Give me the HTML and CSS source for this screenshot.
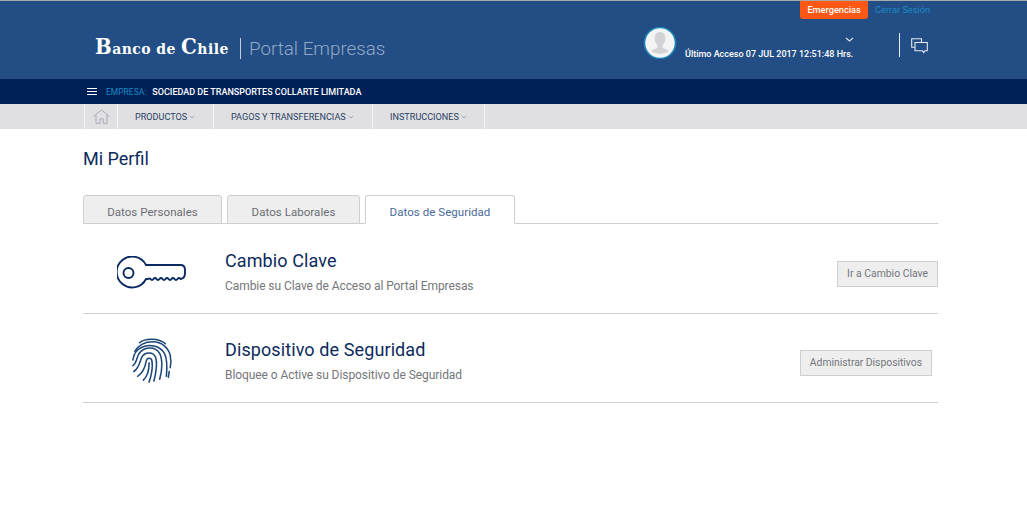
FILE: index.html
```html
<!DOCTYPE html>
<html lang="es">
<head>
<meta charset="utf-8">
<title>Mi Perfil</title>
<link rel="stylesheet" href="styles.css">
</head>
<body>
<header class="masthead">
  <div class="utility">
    <a class="emergency">Emergencias</a>
    <a class="logout">Cerrar Sesión</a>
  </div>
  <div class="brandrow">
    <span class="logo"><b class="logo-cap">B</b>anco de <b class="logo-cap">C</b>hile</span>
    <span class="portal">Portal Empresas</span>
    <div class="account">
      <svg class="avatar" viewBox="0 0 34 32" aria-hidden="true">
        <circle cx="17" cy="16" r="15.5" fill="#f4f4f5" stroke="#1b86b8" stroke-width="1.6"/>
        <path d="M17 5c-4 0-5.5 3.4-5.3 7 .1 2.6 1.3 5 2.8 6.200v2.300c-1.800 1.300-5 2-6.500 3.600a15 15 0 0 0 18 0c-1.500-1.600-4.700-2.300-6.500-3.600v-2.300c1.500-1.200 2.700-3.600 2.800-6.200.2-3.600-1.300-7-5.300-7z" fill="#d2d2d4"/>
      </svg>
      <div class="lastaccess">
        <svg class="chev" viewBox="0 0 9 5" aria-hidden="true"><path d="M1 1l3.500 3L8 1" fill="none" stroke="#dfe6ef" stroke-width="1.100"/></svg>
        <span>Último Acceso 07 JUL 2017 12:51:48 Hrs.</span>
      </div>
      <div class="chat">
        <svg viewBox="0 0 17 16" aria-hidden="true">
          <path d="M10.500 4V.7H.7v8.600h3" fill="none" stroke="#e4e8f0" stroke-width="1.100"/>
          <path d="M4 4.500h12.300v8.300h-2.300l-1.300 1.700-1.300-1.700H4z" fill="none" stroke="#e4e8f0" stroke-width="1.100"/>
        </svg>
      </div>
    </div>
  </div>
</header>
<div class="companybar">
  <span class="burger"><i></i><i></i><i></i></span>
  <span class="company-label">EMPRESA:</span>
  <span class="company-name">SOCIEDAD DE TRANSPORTES COLLARTE LIMITADA</span>
</div>
<nav class="menu">
  <a class="menu-home">
    <svg viewBox="0 0 17 15" aria-hidden="true">
      <path d="M.6 7.500 8.500.8l7.900 6.700M3 6v8.300h4v-4.500h3.200v4.500h3.800V6" fill="none" stroke="#a9a9bb" stroke-width="1"/>
    </svg>
  </a>
  <a class="menu-item">PRODUCTOS<svg class="caret" viewBox="0 0 7 4"><path d="M.7.7l2.800 2.400L6.300.7" fill="none" stroke="#9a9ca2"/></svg></a>
  <a class="menu-item">PAGOS Y TRANSFERENCIAS<svg class="caret" viewBox="0 0 7 4"><path d="M.7.7l2.800 2.400L6.300.7" fill="none" stroke="#9a9ca2"/></svg></a>
  <a class="menu-item">INSTRUCCIONES<svg class="caret" viewBox="0 0 7 4"><path d="M.7.7l2.800 2.400L6.300.7" fill="none" stroke="#9a9ca2"/></svg></a>
</nav>
<main class="page">
  <h1 class="title">Mi Perfil</h1>
  <div class="tabs">
    <a class="tab tab-personal">Datos Personales</a>
    <a class="tab tab-work">Datos Laborales</a>
    <a class="tab tab-security is-active">Datos de Seguridad</a>
  </div>
  <section class="row">
    <div class="row-icon">
      <svg class="key" viewBox="0 0 70 34" aria-hidden="true">
        <path d="M29 9H63.500q4.500 0 4.500 5v3q0 5.500-4.500 6q-1.500-2-3 0q-1.500 2-3 0q-1.500-2-3 0q-1.500 2-3 0q-1.500-2-3 0q-1.500 2-3 0q-1.500-2-3 0q-1.500 2-3 0q-1.500-2-3 0q-1.500 2-3 0q-1-1-2.500 0H29A15.500 15.500 0 1 1 29 9z" fill="none" stroke="#0a2a60" stroke-width="1.900" stroke-linejoin="round"/>
        <circle cx="11.500" cy="17" r="5" fill="none" stroke="#0a2a60" stroke-width="1.900"/>
      </svg>
    </div>
    <div class="row-text">
      <h2>Cambio Clave</h2>
      <p>Cambie su Clave de Acceso al Portal Empresas</p>
    </div>
    <a class="btn">Ir a Cambio Clave</a>
  </section>
  <section class="row">
    <div class="row-icon">
      <svg class="print" viewBox="0 0 44 48" aria-hidden="true">
        <g fill="none" stroke="#1c4679" stroke-width="1.600" stroke-linecap="round">
          <path d="M9 6C15 1 29 1 36 7"/>
          <path d="M4 15C9 7 16 5 23 5c9 0 16 6 18 14 1 5 1 9 0 13"/>
          <path d="M40 36l-1 6"/>
          <path d="M2 24c1-6 4-11 9-13 8-4 19-2 24 6 3 6 3 14 2 24"/>
          <path d="M2 30c4-3 4-8 6-12 5-8 17-9 22-1 3 6 3 17 0 27"/>
          <path d="M3 36c5-3 6-9 8-14 3-7 13-7 15 0 2 7 0 16-2 24"/>
          <path d="M7 41c5-3 8-10 9-16 1-4 6-4 6 1 1 7-1 15-3 21"/>
          <path d="M13 45c4-4 6-11 6-18"/>
        </g>
      </svg>
    </div>
    <div class="row-text">
      <h2>Dispositivo de Seguridad</h2>
      <p>Bloquee o Active su Dispositivo de Seguridad</p>
    </div>
    <a class="btn btn-inset">Administrar Dispositivos</a>
  </section>
</main>
</body>
</html>
```
FILE: styles.css
```css
* { box-sizing: border-box; }
html, body { margin: 0; padding: 0; }
body {
  background: #fff;
  font-family: Roboto, "Liberation Sans", sans-serif;
  overflow: hidden;
}
a { display: block; }
h1, h2, p { margin: 0; font-weight: 400; }

.masthead {
  height: 79px;
  background: #234e85;
  border-top: 1px solid #a9aaac;
}
.utility {
  display: flex;
  justify-content: flex-end;
  height: 18px;
  padding-right: 97px;
}
.emergency {
  width: 68px;
  height: 18px;
  background: #fa5814;
  border-radius: 0 0 3px 3px;
  color: #fff;
  font-size: 9.200px;
  font-weight: 500;
  line-height: 18px;
  text-align: center;
}
.logout {
  margin-left: 7px;
  color: #1b8ac4;
  font-size: 9.200px;
  line-height: 18px;
}
.brandrow {
  display: flex;
  align-items: flex-start;
  padding-left: 95px;
}
.logo {
  width: 145px;
  margin-top: 15px;
  color: #fff;
  font-family: "DejaVu Serif Condensed", "DejaVu Serif", serif;
  font-size: 15.500px;
  font-weight: 700;
  letter-spacing: .45px;
  line-height: 24px;
  white-space: nowrap;
}
.logo-cap {
  font-size: 22px;
  font-weight: 700;
}
.portal {
  margin-top: 19px;
  padding-left: 8px;
  height: 21px;
  border-left: 1px solid #c2cede;
  color: #93a8c5;
  font-size: 18.800px;
  font-weight: 300;
  line-height: 23px;
}
.account {
  display: flex;
  align-items: flex-start;
  margin-left: auto;
  padding-right: 100px;
}
.avatar {
  display: block;
  width: 34px;
  height: 32px;
  margin-top: 8px;
}
.lastaccess {
  position: relative;
  width: 170px;
  margin-left: 8px;
  padding-top: 29px;
  color: #fff;
  font-size: 9px;
  font-weight: 500;
  line-height: 12px;
  white-space: nowrap;
}
.chev {
  position: absolute;
  top: 18px;
  right: 1px;
  width: 9px;
  height: 5px;
}
.chat {
  width: 28px;
  height: 24px;
  margin-top: 14px;
  margin-left: 44px;
  padding: 5px 0 0 11px;
  border-left: 1px solid #e8ecf2;
}
.chat svg { display: block; width: 17px; height: 16px; }

.companybar {
  display: flex;
  align-items: center;
  height: 25px;
  padding-left: 87px;
  background: #002157;
}
.burger {
  display: flex;
  flex-direction: column;
  gap: 2px;
  width: 10px;
}
.burger i { display: block; height: 1px; background: #fff; }
.company-label {
  margin-left: 9px;
  color: #1b8ac4;
  font-size: 8.500px;
}
.company-name {
  margin-left: 6px;
  color: #fff;
  font-size: 9px;
  font-weight: 500;
}

.menu {
  display: flex;
  height: 25px;
  padding-left: 84px;
  background: #e0e0e2;
}
.menu-home {
  width: 34px;
  padding: 5px 0 0 8px;
  border-left: 1px solid #f2f2f3;
  border-right: 1px solid #f2f2f3;
}
.menu-home svg { display: block; width: 17px; height: 15px; }
.menu-item {
  display: flex;
  align-items: center;
  height: 25px;
  padding: 0 0 0 17px;
  border-right: 1px solid #f2f2f3;
  color: #2a3f63;
  font-size: 9.100px;
}
.menu-item:nth-child(2) { width: 96px; }
.menu-item:nth-child(3) { width: 159px; }
.menu-item:nth-child(4) { width: 112px; }
.caret { width: 6px; height: 4px; margin-left: 2px; }

.page { padding: 0 89px 0 83px; }
.title {
  padding-top: 18px;
  color: #0c2a5c;
  font-size: 18px;
  line-height: 24px;
}
.tabs {
  display: flex;
  gap: 5px;
  height: 37px;
  margin-top: 16px;
  align-items: flex-end;
  border-bottom: 1px solid #cfcfd1;
}
.tab {
  height: 29px;
  margin-bottom: -1px;
  background: #eeeeef;
  border: 1px solid #cfcfd1;
  border-radius: 3px 3px 0 0;
  color: #6b6d72;
  font-size: 11.500px;
  letter-spacing: .05px;
  line-height: 32px;
  text-align: center;
}
.tab-personal { width: 139px; }
.tab-work { width: 133px; }
.tab-security { width: 150px; }
.is-active {
  background: #fff;
  border-bottom-color: #fff;
  color: #4a6a9a;
}
.row {
  display: flex;
  align-items: center;
  height: 90px;
  border-bottom: 1px solid #cfcfd1;
}
.row + .row { height: 89px; }
.row-icon {
  display: flex;
  justify-content: center;
  width: 138px;
  padding-top: 8px;
}
.key { display: block; width: 70px; height: 34px; margin-left: -1px; }
.print { display: block; width: 44px; height: 46px; margin-top: -4px; }
.row-text { flex: 1; margin-left: 4px; padding-top: 5px; }
.row-text h2 {
  color: #0c2a5c;
  font-size: 18px;
  letter-spacing: .1px;
  line-height: 24px;
}
.row-text p {
  margin-top: 5px;
  color: #75767a;
  font-size: 12px;
  letter-spacing: -.07px;
  line-height: 16px;
}
.btn {
  height: 26px;
  margin-top: 11px;
  padding: 0 9px;
  background: #eeeeef;
  border: 1px solid #cfcfd1;
  color: #74767c;
  font-size: 10.400px;
  line-height: 24px;
  white-space: nowrap;
}
.btn-inset { margin-top: 9px; margin-right: 6px; letter-spacing: -.03px; }
```
